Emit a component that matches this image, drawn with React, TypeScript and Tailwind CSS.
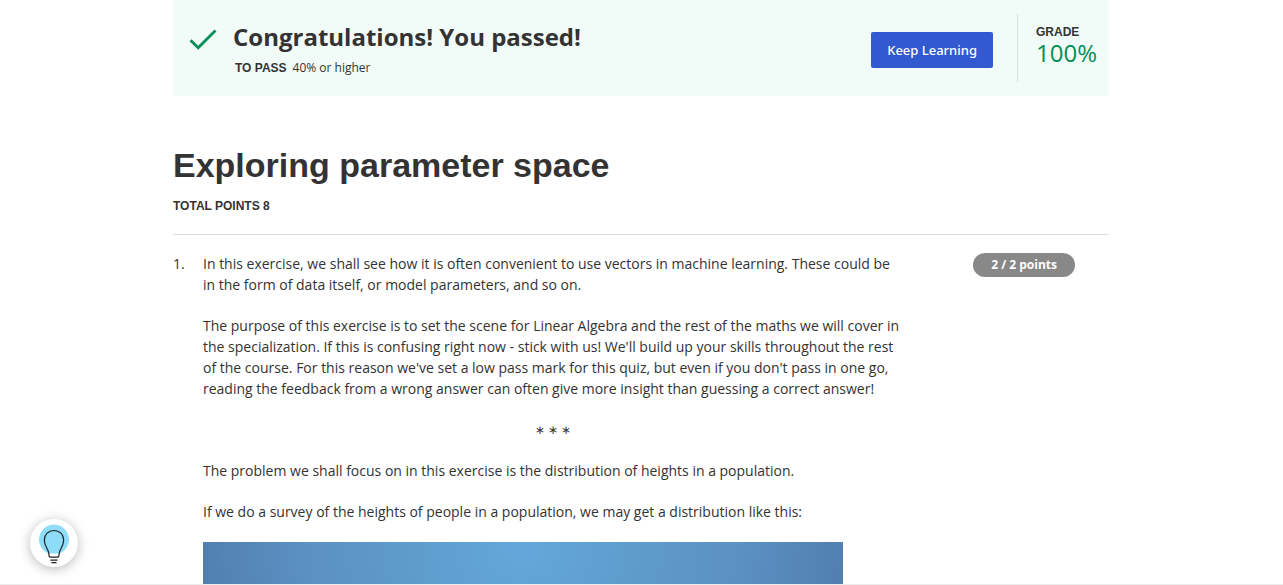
const paragraph = "text-sm leading-[21px]";
const label = "font-['Liberation_Sans',sans-serif] text-xs leading-4 font-bold uppercase";

function ResultBanner() {
  return (
    <header className="flex h-24 items-start bg-[#f1fbf8] pr-3 pl-4">
      <svg className="mt-6 h-8 w-7 shrink-0" viewBox="0 0 28 32" fill="none" aria-hidden="true">
        <path d="M1.5 16.2 L9.2 23.8 L26.5 6.5" stroke="#008f57" strokeWidth="2.8" />
      </svg>
      <div className="ml-4 flex-1">
        <h2 className="mt-5 text-2xl leading-[34px] font-bold">Congratulations! You passed!</h2>
        <p className="ml-0.5 flex gap-1.5 pt-1.5 text-xs leading-4">
          <span className={label}>To pass</span>
          <span>40% or higher</span>
        </p>
      </div>
      <button
        type="button"
        className="mt-8 h-9 rounded-xs bg-[#3259d0] px-4 font-['Noto_Sans',sans-serif] text-[13px] leading-5 font-medium text-white"
      >
        Keep Learning
      </button>
      <div className="mt-3.5 ml-6 h-[68px] border-l border-[#d9dedc] pt-2.5 pl-[18px]">
        <div className={label}>Grade</div>
        <div className="text-2xl leading-[26px] text-[#008f57]">100%</div>
      </div>
    </header>
  );
}

function Question() {
  return (
    <section className="flex items-start pt-[18px]">
      <div className="w-[30px] shrink-0 text-sm leading-[21px]">1.</div>
      <div className="flex w-[700px] flex-col gap-5">
        <p className={paragraph}>
          In this exercise, we shall see how it is often convenient to use vectors in machine learning. These could be
          in the form of data itself, or model parameters, and so on.
        </p>
        <p className={paragraph}>
          The purpose of this exercise is to set the scene for Linear Algebra and the rest of the maths we will cover in
          the specialization. If this is confusing right now - stick with us! We'll build up your skills throughout the
          rest of the course. For this reason we've set a low pass mark for this quiz, but even if you don't pass in one
          go, reading the feedback from a wrong answer can often give more insight than guessing a correct answer!
        </p>
        <p className="text-center text-xs leading-[21px]">∗ ∗ ∗</p>
        <p className={paragraph}>
          The problem we shall focus on in this exercise is the distribution of heights in a population.
        </p>
        <p className={paragraph}>
          If we do a survey of the heights of people in a population, we may get a distribution like this:
        </p>
        <div className="h-[42px] w-[640px] bg-[radial-gradient(circle_340px_at_50%_0%,#64a8db_0%,#5e9bcb_35%,#5b90c2_65%,#527eb0_95%)]" />
      </div>
      <div className="ml-auto mr-[34px] rounded-full bg-[#888888] px-[18px] text-xs leading-6 font-bold text-white">
        2 / 2 points
      </div>
    </section>
  );
}

function HintButton() {
  return (
    <button
      type="button"
      aria-label="Hint"
      className="fixed bottom-[18px] left-[30px] size-12 rounded-full bg-white shadow-[0_2px_12px_rgba(0,0,0,0.28)]"
    >
      <svg className="size-12" viewBox="0 0 48 48" fill="none" aria-hidden="true">
        <path d="M18.5 34.5 A15 15 0 1 1 29.5 34.5 Z" fill="#8fdcf8" />
        <path
          d="M20 38.2 C18.8 37.8 19 36 18.8 34.3 C18.4 30 14.3 27.2 14.3 21 C14.3 15.5 18.5 11.5 24 11.5 C29.5 11.5 33.7 15.5 33.7 21 C33.7 27.2 29.6 30 29.2 34.3 C29 36 29.2 37.8 28 38.2 Z"
          stroke="#1f1f1f"
          strokeWidth="1.2"
        />
        <path d="M20.5 41.2 H27.5 M21.5 43.7 H26.5" stroke="#1f1f1f" strokeWidth="1.2" />
      </svg>
    </button>
  );
}

export default function App() {
  return (
    <div className="border-b border-[#ececec] bg-white pr-px font-['Open_Sans',sans-serif] text-[#333333]">
      <main className="mx-auto max-w-[936px]">
        <ResultBanner />
        <div className="border-b border-[#dddddd] pt-12 pb-5">
          <h1 className="font-['Liberation_Sans',sans-serif] text-[34px] leading-[42px] font-bold">
            Exploring parameter space
          </h1>
          <p className={`${label} mt-3`}>Total points 8</p>
        </div>
        <Question />
      </main>
      <HintButton />
    </div>
  );
}
